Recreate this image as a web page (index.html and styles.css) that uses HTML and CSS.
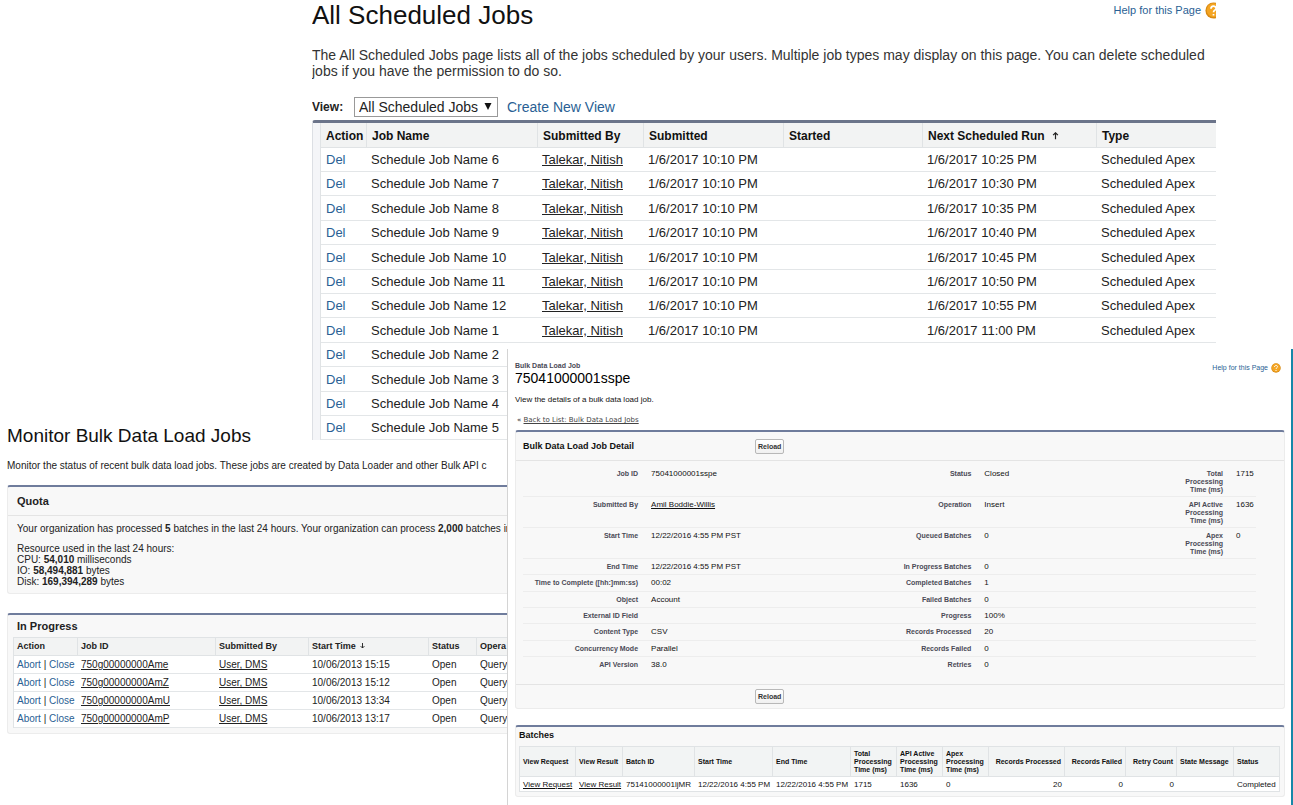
FILE: index.html
```html
<!DOCTYPE html>
<html lang="en">
<head>
<meta charset="utf-8">
<title>Salesforce Jobs</title>
<link rel="stylesheet" href="styles.css">
</head>
<body>
<main class="desk">

<section class="window monitor">
  <h1 class="monitor-title">Monitor Bulk Data Load Jobs</h1>
  <p class="monitor-intro">Monitor the status of recent bulk data load jobs. These jobs are created by Data Loader and other Bulk API c</p>
  <section class="panel quota">
    <h2 class="panel-title quota-title">Quota</h2>
    <div class="quota-body">
      <p class="quota-line">Your organization has processed <b>5</b> batches in the last 24 hours. Your organization can process <b>2,000</b> batches in a</p>
      <p>Resource used in the last 24 hours:</p>
      <p>CPU: <b>54,010</b> milliseconds</p>
      <p>IO: <b>58,494,881</b> bytes</p>
      <p>Disk: <b>169,394,289</b> bytes</p>
    </div>
  </section>
  <section class="panel progress">
    <h2 class="panel-title progress-title">In Progress</h2>
    <table class="progress-table">
      <colgroup><col class="p-action"><col class="p-id"><col class="p-by"><col class="p-start"><col class="p-status"><col class="p-op"></colgroup>
      <thead><tr><th>Action</th><th>Job ID</th><th>Submitted By</th><th>Start Time <svg class="arrow arrow-sm" viewBox="0 0 8 10"><path d="M4 1v8M1 6l3 3 3-3"/></svg></th><th>Status</th><th>Opera</th></tr></thead>
      <tbody>
        <tr><td><a href="#">Abort</a> | <a href="#">Close</a></td><td><a class="under" href="#">750g00000000Ame</a></td><td><a class="under" href="#">User, DMS</a></td><td>10/06/2013 15:15</td><td>Open</td><td>Query</td></tr>
        <tr><td><a href="#">Abort</a> | <a href="#">Close</a></td><td><a class="under" href="#">750g00000000AmZ</a></td><td><a class="under" href="#">User, DMS</a></td><td>10/06/2013 15:12</td><td>Open</td><td>Query</td></tr>
        <tr><td><a href="#">Abort</a> | <a href="#">Close</a></td><td><a class="under" href="#">750g00000000AmU</a></td><td><a class="under" href="#">User, DMS</a></td><td>10/06/2013 13:34</td><td>Open</td><td>Query</td></tr>
        <tr><td><a href="#">Abort</a> | <a href="#">Close</a></td><td><a class="under" href="#">750g00000000AmP</a></td><td><a class="under" href="#">User, DMS</a></td><td>10/06/2013 13:17</td><td>Open</td><td>Query</td></tr>
      </tbody>
    </table>
  </section>
</section>

<section class="window scheduled">
  <header class="sched-head">
    <h1 class="sched-title">All Scheduled Jobs</h1>
    <a class="help help-lg" href="#">Help for this Page
      <svg class="help-icon" viewBox="0 0 20 20"><circle cx="10" cy="10" r="9.5" fill="#d98a12"/><circle cx="10" cy="9.500" r="8" fill="#f4a523"/><path d="M7 8c0-4 6-4 6-.5 0 2-3 2.200-3 4.500M10 14v2" fill="none" stroke="#fff" stroke-width="2"/></svg></a>
  </header>
  <p class="sched-intro">The All Scheduled Jobs page lists all of the jobs scheduled by your users. Multiple job types may display on this page. You can delete scheduled jobs if you have the permission to do so.</p>
  <form class="view-bar">
    <label class="view-label" for="view">View:</label>
    <span class="select-box"><select id="view" class="view-select"><option>All Scheduled Jobs</option></select><svg class="select-arrow" viewBox="0 0 8 8"><path d="M0 0h8L4 8z"/></svg></span>
    <a class="view-link" href="#">Create New View</a>
  </form>
  <div class="sched-list">
  <table class="sched-table">
    <colgroup><col class="s-action"><col class="s-name"><col class="s-by"><col class="s-sub"><col class="s-started"><col class="s-next"><col class="s-type"></colgroup>
    <thead><tr><th>Action</th><th>Job Name</th><th>Submitted By</th><th>Submitted</th><th>Started</th><th>Next Scheduled Run <svg class="arrow" viewBox="0 0 8 10"><path d="M4 9V1M1 4l3-3 3 3"/></svg></th><th>Type</th></tr></thead>
    <tbody>
      <tr><td><a href="#">Del</a></td><td>Schedule Job Name 6</td><td><a class="under" href="#">Talekar, Nitish</a></td><td>1/6/2017 10:10 PM</td><td></td><td>1/6/2017 10:25 PM</td><td>Scheduled Apex</td></tr>
      <tr><td><a href="#">Del</a></td><td>Schedule Job Name 7</td><td><a class="under" href="#">Talekar, Nitish</a></td><td>1/6/2017 10:10 PM</td><td></td><td>1/6/2017 10:30 PM</td><td>Scheduled Apex</td></tr>
      <tr><td><a href="#">Del</a></td><td>Schedule Job Name 8</td><td><a class="under" href="#">Talekar, Nitish</a></td><td>1/6/2017 10:10 PM</td><td></td><td>1/6/2017 10:35 PM</td><td>Scheduled Apex</td></tr>
      <tr><td><a href="#">Del</a></td><td>Schedule Job Name 9</td><td><a class="under" href="#">Talekar, Nitish</a></td><td>1/6/2017 10:10 PM</td><td></td><td>1/6/2017 10:40 PM</td><td>Scheduled Apex</td></tr>
      <tr><td><a href="#">Del</a></td><td>Schedule Job Name 10</td><td><a class="under" href="#">Talekar, Nitish</a></td><td>1/6/2017 10:10 PM</td><td></td><td>1/6/2017 10:45 PM</td><td>Scheduled Apex</td></tr>
      <tr><td><a href="#">Del</a></td><td>Schedule Job Name 11</td><td><a class="under" href="#">Talekar, Nitish</a></td><td>1/6/2017 10:10 PM</td><td></td><td>1/6/2017 10:50 PM</td><td>Scheduled Apex</td></tr>
      <tr><td><a href="#">Del</a></td><td>Schedule Job Name 12</td><td><a class="under" href="#">Talekar, Nitish</a></td><td>1/6/2017 10:10 PM</td><td></td><td>1/6/2017 10:55 PM</td><td>Scheduled Apex</td></tr>
      <tr><td><a href="#">Del</a></td><td>Schedule Job Name 1</td><td><a class="under" href="#">Talekar, Nitish</a></td><td>1/6/2017 10:10 PM</td><td></td><td>1/6/2017 11:00 PM</td><td>Scheduled Apex</td></tr>
      <tr><td><a href="#">Del</a></td><td>Schedule Job Name 2</td><td></td><td></td><td></td><td></td><td></td></tr>
      <tr><td><a href="#">Del</a></td><td>Schedule Job Name 3</td><td></td><td></td><td></td><td></td><td></td></tr>
      <tr><td><a href="#">Del</a></td><td>Schedule Job Name 4</td><td></td><td></td><td></td><td></td><td></td></tr>
      <tr><td><a href="#">Del</a></td><td>Schedule Job Name 5</td><td></td><td></td><td></td><td></td><td></td></tr>
    </tbody>
  </table>
  </div>
</section>

<section class="window bulk">
  <header class="bulk-head">
    <div>
      <p class="bulk-kind">Bulk Data Load Job</p>
      <h1 class="bulk-title">75041000001sspe</h1>
    </div>
    <a class="help help-sm" href="#">Help for this Page
      <svg class="help-icon" viewBox="0 0 20 20"><circle cx="10" cy="10" r="9.5" fill="#d98a12"/><circle cx="10" cy="9.500" r="8" fill="#f4a523"/><path d="M7 8c0-4 6-4 6-.5 0 2-3 2.200-3 4.500M10 14v2" fill="none" stroke="#fff" stroke-width="2"/></svg></a>
  </header>
  <p class="bulk-intro">View the details of a bulk data load job.</p>
  <p class="bulk-back">« <a href="#">Back to List: Bulk Data Load Jobs</a></p>
  <section class="panel detail">
    <div class="detail-bar detail-top"><h2 class="detail-title">Bulk Data Load Job Detail</h2><button class="reload" type="button">Reload</button></div>
    <table class="detail-table">
      <colgroup><col class="d-l1"><col class="d-v1"><col class="d-l2"><col class="d-v2"><col class="d-l3"><col class="d-v3"></colgroup>
      <tbody>
        <tr class="tall"><th>Job ID</th><td>75041000001sspe</td><th>Status</th><td>Closed</td><th>Total<br>Processing<br>Time (ms)</th><td>1715</td></tr>
        <tr class="tall"><th>Submitted By</th><td><a class="under" href="#">Amil Boddie-Willis</a></td><th>Operation</th><td>Insert</td><th>API Active<br>Processing<br>Time (ms)</th><td>1636</td></tr>
        <tr class="tall"><th>Start Time</th><td>12/22/2016 4:55 PM PST</td><th>Queued Batches</th><td>0</td><th>Apex<br>Processing<br>Time (ms)</th><td>0</td></tr>
        <tr><th>End Time</th><td>12/22/2016 4:55 PM PST</td><th>In Progress Batches</th><td>0</td><th></th><td></td></tr>
        <tr><th>Time to Complete ([hh:]mm:ss)</th><td>00:02</td><th>Completed Batches</th><td>1</td><th></th><td></td></tr>
        <tr><th>Object</th><td>Account</td><th>Failed Batches</th><td>0</td><th></th><td></td></tr>
        <tr><th>External ID Field</th><td></td><th>Progress</th><td>100%</td><th></th><td></td></tr>
        <tr><th>Content Type</th><td>CSV</td><th>Records Processed</th><td>20</td><th></th><td></td></tr>
        <tr><th>Concurrency Mode</th><td>Parallel</td><th>Records Failed</th><td>0</td><th></th><td></td></tr>
        <tr><th>API Version</th><td>38.0</td><th>Retries</th><td>0</td><th></th><td></td></tr>
      </tbody>
    </table>
    <div class="detail-bar detail-bottom"><span></span><button class="reload" type="button">Reload</button></div>
  </section>
  <section class="panel batches">
    <h2 class="detail-title">Batches</h2>
    <table class="batch-table">
      <colgroup><col class="b-req"><col class="b-res"><col class="b-id"><col class="b-time"><col class="b-time"><col class="b-ms"><col class="b-ms"><col class="b-ms"><col class="b-proc"><col class="b-fail"><col class="b-retry"><col class="b-msg"><col class="b-status"></colgroup>
      <thead><tr><th>View Request</th><th>View Result</th><th>Batch ID</th><th>Start Time</th><th>End Time</th><th>Total<br>Processing<br>Time (ms)</th><th>API Active<br>Processing<br>Time (ms)</th><th>Apex<br>Processing<br>Time (ms)</th><th class="num">Records Processed</th><th class="num">Records Failed</th><th class="num">Retry Count</th><th>State Message</th><th>Status</th></tr></thead>
      <tbody><tr><td><a class="under" href="#">View Request</a></td><td><a class="under" href="#">View Result</a></td><td>75141000001ljMR</td><td>12/22/2016 4:55 PM</td><td>12/22/2016 4:55 PM</td><td>1715</td><td>1636</td><td>0</td><td class="num">20</td><td class="num">0</td><td class="num">0</td><td></td><td>Completed</td></tr></tbody>
    </table>
  </section>
</section>

</main>
</body>
</html>
```
FILE: styles.css
```css
* { box-sizing: border-box; }
body {
  margin: 0;
  background: #fff;
  color: #222;
  font-family: "Liberation Sans", Arial, sans-serif;
}
h1, h2, p { margin: 0; font-weight: normal; }
a { color: #2a5f94; text-decoration: none; }
a.under { color: #222; text-decoration: underline; }
table { border-collapse: separate; border-spacing: 0; table-layout: fixed; }
th, td { padding: 0; text-align: left; white-space: nowrap; }

/* Overlapping windows */
.desk { position: relative; min-height: 100vh; overflow: hidden; }
.window { position: absolute; }
.scheduled { top: 0; left: 312px; right: 77px; overflow: hidden; background: #fff; }
.monitor { top: 424px; left: 7px; width: 501px; overflow: hidden; }
.bulk {
  top: 349px; left: 507px; right: 0; bottom: 0;
  padding: 13px 6px 0 7px;
  background: #fff;
  border-left: 1px solid #d4d4d4;
  border-right: 2px solid #1787a8;
}

.help { display: flex; flex: none; align-items: center; }
.help-icon { flex: none; }
.arrow { width: 7px; height: 8px; margin-left: 4px; fill: none; stroke: #222; stroke-width: 1.5; }
.arrow-sm { width: 5px; height: 7px; margin-left: 2px; }

/* All Scheduled Jobs */
.sched-head { display: flex; justify-content: space-between; align-items: flex-start; }
.sched-title { color: #111; font-size: 26px; line-height: 30px; }
.help-lg { gap: 4px; margin-right: -6px; font-size: 11px; line-height: 20px; }
.help-lg .help-icon { width: 17px; height: 17px; }
.sched-intro { margin-top: 17px; font-size: 14px; line-height: 16px; color: #333; }
.view-bar { display: flex; align-items: center; height: 20px; margin-top: 18px; }
.view-label { width: 42px; font-size: 12px; font-weight: bold; }
.select-box { position: relative; }
.view-select {
  display: block;
  width: 144px; height: 20px;
  padding: 0 4px;
  border: 1px solid #999;
  border-radius: 0;
  background: #fff;
  color: #222;
  font: 14px "Liberation Sans", Arial, sans-serif;
  appearance: none;
}
.select-arrow { position: absolute; right: 6px; top: 6px; width: 8px; height: 7px; fill: #111; }
.view-link { margin-left: 9px; font-size: 14px; }
.sched-list {
  margin-top: 3px;
  padding-left: 7px;
  border-top: 3px solid #6b748a;
  border-left: 1px solid #dcdfe4;
  border-radius: 3px 0 0 0;
  background: #f4f5f8;
}
.sched-table { width: 100%; font-size: 13px; background: #fff; border-left: 1px solid #e0e3e5; }
.sched-table th {
  height: 25px; padding: 2px 0 0 5px;
  background: #f2f3f3; border-bottom: 1px solid #e0e3e5; border-right: 1px solid #e0e3e5;
  font-size: 12px; color: #111;
}
.sched-table th:last-child { border-right: 0; }
.sched-table td { height: 24px; padding-left: 4px; border-bottom: 1px solid #e3e6e8; }
.sched-table td:first-child { padding-left: 5px; }
.sched-table tr:nth-child(5n+3) td, .sched-table tr:nth-child(5n) td { height: 25px; }
.s-action { width: 46px; }
.s-name { width: 171px; }
.s-by { width: 106px; }
.s-sub { width: 140px; }
.s-started { width: 139px; }
.s-next { width: 174px; }

/* Shared panel frame */
.panel {
  background: #f8f8f8;
  border: 1px solid #ececec;
  border-top: 2px solid #6f7c9c;
  border-radius: 3px;
}

/* Monitor Bulk Data Load Jobs */
.monitor { font-size: 10px; line-height: 11px; white-space: nowrap; }
.monitor-title { font-size: 19px; line-height: 24px; color: #111; }
.monitor-intro { margin-top: 12px; font-size: 10px; }
.monitor .panel { border-right: 0; border-radius: 3px 0 0 3px; }
.panel-title { padding-left: 9px; font-size: 11px; font-weight: bold; color: #222; }
.quota { margin-top: 14px; }
.quota-title { line-height: 28px; border-bottom: 1px solid #e4e4e4; }
.quota-body { padding: 7px 0 6px 9px; }
.quota-line { margin-bottom: 9px; }
.progress { margin-top: 19px; padding: 0 0 5px 5px; }
.progress-title { padding-left: 4px; line-height: 22px; }
.progress-table { width: 100%; background: #fff; border-left: 1px solid #e0e3e5; border-top: 1px solid #e0e3e5; }
.progress-table th {
  height: 18px; padding-left: 3px; font-size: 9px;
  background: #f2f3f3; border-right: 1px solid #e0e3e5; border-bottom: 1px solid #e0e3e5;
}
.progress-table td { height: 18px; padding-left: 3px; border-bottom: 1px solid #e3e6e8; }
.p-action { width: 64px; }
.p-id { width: 138px; }
.p-by { width: 93px; }
.p-start { width: 120px; }
.p-status { width: 48px; }

/* Bulk Data Load Job */
.bulk { font-size: 8px; color: #111; }
.bulk .under { color: #111; }
.bulk-head { display: flex; justify-content: space-between; align-items: flex-start; }
.bulk-kind { font-size: 7px; line-height: 8px; font-weight: bold; color: #4a4a56; }
.bulk-title { font-size: 14px; line-height: 16px; color: #000; }
.help-sm { gap: 3px; margin-right: 4px; font-size: 7px; line-height: 11px; }
.help-sm .help-icon { width: 10px; height: 10px; }
.bulk-intro { margin-top: 9px; line-height: 10px; }
.bulk-back { margin: 11px 0 0 2px; font: 7px/9px "DejaVu Sans", sans-serif; }
.bulk-back a { color: #444; text-decoration: underline; }
.detail { margin-top: 5px; }
.detail-bar { display: grid; grid-template-columns: 232px auto; justify-content: start; align-items: center; padding-left: 7px; }
.detail-top { height: 29px; border-bottom: 1px solid #e4e4e4; }
.detail-bottom { height: 24px; border-top: 1px solid #e4e4e4; }
.detail-title { font-size: 9px; font-weight: bold; color: #111; }
.reload {
  height: 15px; padding: 0 2px;
  border: 1px solid #b8b8b8; border-radius: 2px;
  background: linear-gradient(#fff, #f0f0f0);
  color: #333;
  font: bold 7px "Liberation Sans", Arial, sans-serif;
}
.detail-table { width: calc(100% - 35px); margin: 5px 28px 11px 7px; }
.detail-table th, .detail-table td { height: 16px; padding-top: 4px; vertical-align: top; line-height: 8px; border-bottom: 1px solid #ededed; }
.detail-table tr:nth-child(3n+5) th, .detail-table tr:nth-child(3n+5) td { height: 17px; }
.detail-table .tall th, .detail-table .tall td { height: 31px; }
.detail-table th { padding-right: 13px; text-align: right; font-size: 7px; color: #4a4a56; }
.detail-table tr:last-child th, .detail-table tr:last-child td { border-bottom: 0; }
.d-l1 { width: 128px; }
.d-v1 { width: 28%; }
.d-l2 { width: 128px; }
.d-v2 { width: 20%; }
.d-l3 { width: 105px; }
.d-v3 { width: 20px; }

.batches { margin-top: 16px; padding: 0 4px 4px 3px; }
.batches .detail-title { line-height: 16px; }
.batch-table { width: 100%; margin-top: 3px; background: #fff; border-left: 1px solid #e0e3e5; border-top: 1px solid #e0e3e5; }
.batch-table th, .batch-table td { padding: 0 3px; border-bottom: 1px solid #e0e3e5; }
.batch-table th { height: 30px; font-size: 7px; line-height: 8px; background: #f2f4f4; border-right: 1px solid #e0e3e5; }
.batch-table td { height: 15px; }
.batch-table td:last-child { border-right: 1px solid #e0e3e5; }
.batch-table .num { text-align: right; }
.b-req { width: 56px; }
.b-res { width: 47px; }
.b-id { width: 72px; }
.b-time { width: 78px; }
.b-ms { width: 46px; }
.b-proc { width: 76px; }
.b-fail { width: 61px; }
.b-retry { width: 51px; }
.b-msg { width: 57px; }
```
